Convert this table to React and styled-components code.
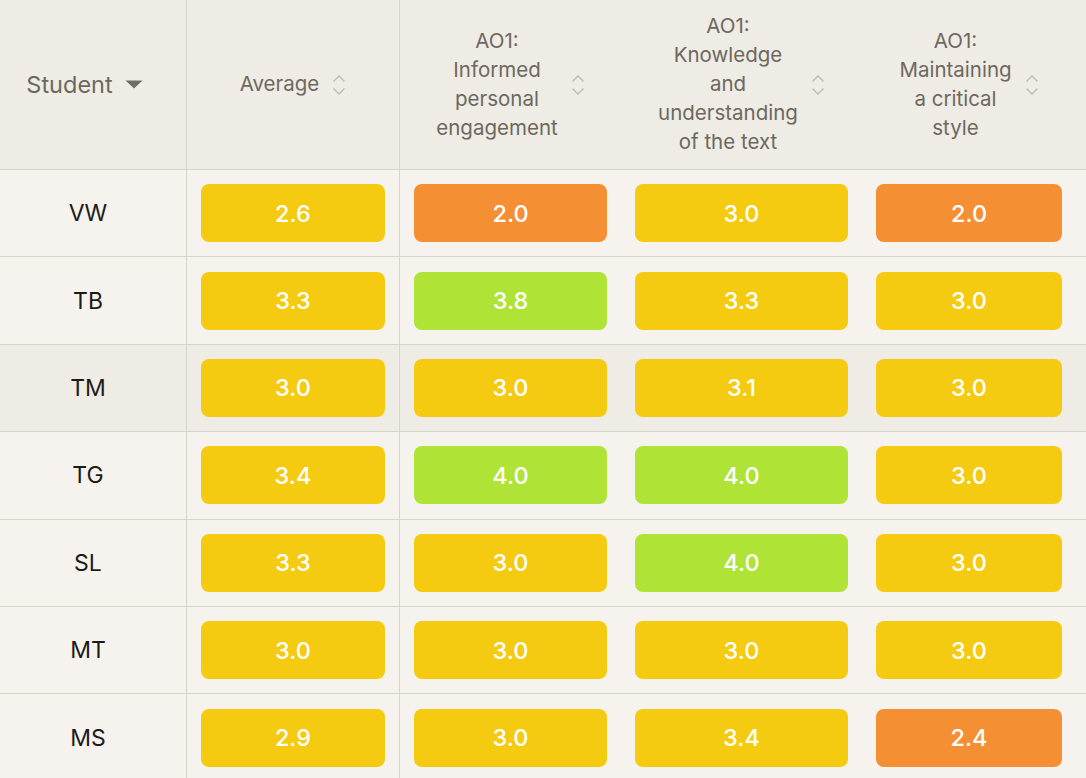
import styled, { createGlobalStyle } from "styled-components";

const GlobalStyle = createGlobalStyle`
  html, body {
    margin: 0;
    padding: 0;
    background: #f6f3ee;
    font-family: Inter, "Noto Sans", "Liberation Sans", sans-serif;
    overflow: hidden;
  }
`;

const columns = [
  { key: "avg", label: "Average" },
  { key: "a", label: "AO1:\nInformed\npersonal\nengagement" },
  { key: "b", label: "AO1:\nKnowledge\nand\nunderstanding\nof the text" },
  { key: "c", label: "AO1:\nMaintaining\na critical\nstyle" },
];

const rows = [
  { name: "VW", values: [2.6, 2.0, 3.0, 2.0] },
  { name: "TB", values: [3.3, 3.8, 3.3, 3.0] },
  { name: "TM", values: [3.0, 3.0, 3.1, 3.0], hover: true },
  { name: "TG", values: [3.4, 4.0, 4.0, 3.0] },
  { name: "SL", values: [3.3, 3.0, 4.0, 3.0] },
  { name: "MT", values: [3.0, 3.0, 3.0, 3.0] },
  { name: "MS", values: [2.9, 3.0, 3.4, 2.4] },
];

const tone = (v) => {
  if (v >= 3.5) return "#afe335";
  if (v >= 2.5) return "#f5cb11";
  return "#f58f34";
};

const SortIcon = () => (
  <svg width="14" height="22" viewBox="0 0 14 22" fill="none">
    <path d="M1.5 7.5 L7 2 L12.5 7.5" stroke="#bfbab1" strokeWidth="1.4" />
    <path d="M1.5 14.5 L7 20 L12.5 14.5" stroke="#bfbab1" strokeWidth="1.4" />
  </svg>
);

const Caret = () => (
  <svg width="18" height="9" viewBox="0 0 18 9">
    <path d="M0.5 0.5 H17.5 L9 8.5 Z" fill="#716c61" />
  </svg>
);

const App = () => {
  return (
    <>
      <GlobalStyle />
      <Table>
        <HeadCell $divider>
          <StudentLabel>
            Student <Caret />
          </StudentLabel>
        </HeadCell>
        {columns.map((c, i) => (
          <HeadCell key={c.key} $divider={i === 0}>
            <HeadLabel>{c.label}</HeadLabel>
            <SortIcon />
          </HeadCell>
        ))}
        <HeadCell />

        {rows.map((r) => (
          <Row key={r.name} $hover={r.hover}>
            <NameCell $divider>{r.name}</NameCell>
            {r.values.map((v, i) => (
              <ScoreCell key={i} $divider={i === 0}>
                <Pill $bg={tone(v)}>{v.toFixed(1)}</Pill>
              </ScoreCell>
            ))}
            <ScoreCell />
          </Row>
        ))}
      </Table>
    </>
  );
};

const Table = styled.div`
  display: grid;
  grid-template-columns: 187px 213px 221px 241px 214px 1fr;
  width: 100%;
`;

const HeadCell = styled.div`
  height: 169px;
  background: #efece5;
  border-bottom: 1px solid #d9d4c9;
  border-right: ${(p) => (p.$divider ? "1px solid #d9d4c9" : "none")};
  display: flex;
  align-items: center;
  justify-content: center;
  gap: 13px;
  color: #6d685e;
`;

const StudentLabel = styled.div`
  display: flex;
  align-items: center;
  gap: 12px;
  font-size: 23.5px;
  color: #6d685e;
  margin-right: 17px;
`;

const HeadLabel = styled.div`
  white-space: pre-line;
  text-align: center;
  font-size: 20.5px;
  line-height: 29px;
  margin-top: -2px;
`;

const Row = styled.div`
  display: contents;
  & > div {
    background: ${(p) => (p.$hover ? "#efece5" : "#f6f3ee")};
  }
`;

const NameCell = styled.div`
  height: 86.4px;
  border-bottom: 1px solid #d9d4c9;
  border-right: ${(p) => (p.$divider ? "1px solid #d9d4c9" : "none")};
  display: flex;
  align-items: center;
  justify-content: center;
  padding-right: 10px;
  font-size: 23px;
  color: #1c1b19;
`;

const ScoreCell = styled.div`
  height: 86.4px;
  border-bottom: 1px solid #d9d4c9;
  border-right: ${(p) => (p.$divider ? "1px solid #d9d4c9" : "none")};
  display: flex;
  align-items: center;
  padding: 0 14px;
`;

const Pill = styled.div`
  flex: 1;
  height: 58px;
  border-radius: 8px;
  background: ${(p) => p.$bg};
  color: #ffffff;
  font-size: 23.5px;
  font-weight: 500;
  display: flex;
  align-items: center;
  justify-content: center;
`;

export default App;
